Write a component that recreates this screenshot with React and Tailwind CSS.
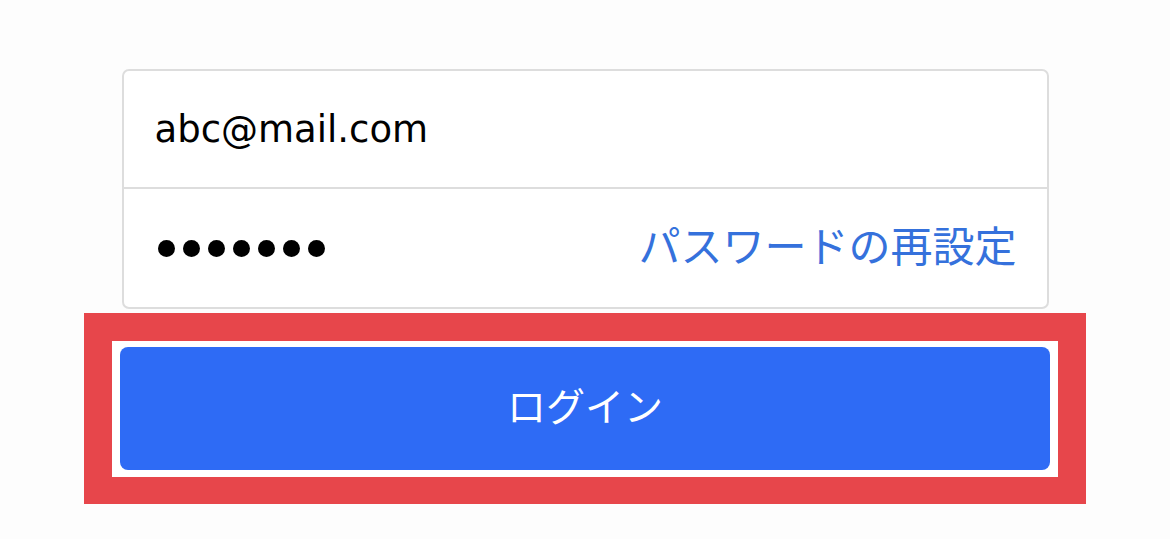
import React from 'react';

const font = { fontFamily: '"Liberation Sans", "Noto Sans CJK JP", sans-serif' };

const App = () => {
  const dots = [0, 1, 2, 3, 4, 5, 6];

  return (
    <div className="min-h-screen w-full bg-[#fdfdfd] pt-[69px]" style={font}>
      <div className="mx-auto flex w-[927px] flex-col rounded-[7px] border-2 border-[#dddddd] bg-white">
        <div className="flex h-[118px] items-center border-b-2 border-[#dddddd] pl-[31px] pr-[30px]">
          <span className="font-['DejaVu_Sans',sans-serif] text-[37px] leading-none text-black">abc@mail.com</span>
        </div>
        <div className="flex h-[118px] items-center justify-between pl-[34px] pr-[30px]">
          <div className="flex gap-[8px]">
            {dots.map((d) => (
              <span key={d} className="h-[17px] w-[17px] rounded-full bg-black" />
            ))}
          </div>
          <button className="text-[42px] leading-none text-[#3571dc]">パスワードの再設定</button>
        </div>
      </div>

      <div className="mx-auto mt-[4px] w-[1002px] border-[28px] border-b-[27px] border-[#e7464b] bg-white px-[8px] pt-[6px] pb-[7px]">
        <button className="flex h-[123px] w-full items-center justify-center rounded-[8px] bg-[#2e6bf5] text-[39px] text-white">
          ログイン
        </button>
      </div>
    </div>
  );
};

export default App;
